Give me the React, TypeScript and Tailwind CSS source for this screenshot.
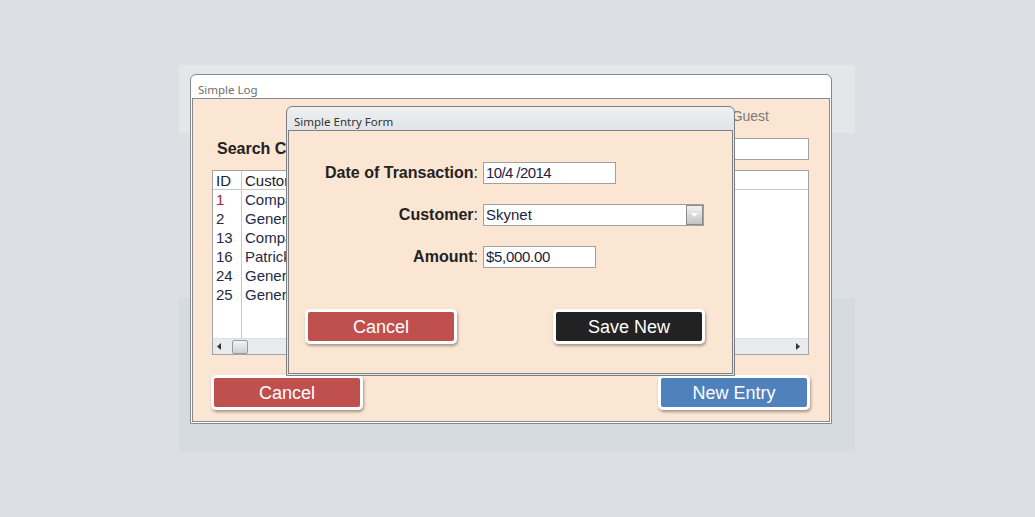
import React from "react";

const rows = [
  { id: 1, name: "Company Alpha", selected: true },
  { id: 2, name: "General Store" },
  { id: 13, name: "Company Beta" },
  { id: 16, name: "Patrick Doyle" },
  { id: 24, name: "General Supply" },
  { id: 25, name: "General Parts" },
];

function FlatButton({
  label,
  tone,
  className = "",
}: {
  label: string;
  tone: "red" | "blue" | "black";
  className?: string;
}) {
  const toneClass =
    tone === "red" ? "bg-[#c0504d]" : tone === "blue" ? "bg-[#4f81bd]" : "bg-[#222222]";
  return (
    <button
      className={`h-[35px] w-[152px] rounded-[5px] border-[3px] border-white shadow-[1px_2px_3px_rgba(0,0,0,0.35)] ${className}`}
    >
      <div className={`flex h-full w-full items-center justify-center rounded-[2px] pt-[1px] text-[18px] text-white ${toneClass}`}>
        {label}
      </div>
    </button>
  );
}

function DataGrid() {
  return (
    <div className="mt-[10px] flex h-[185px] flex-col border border-[#a3a3a3] bg-white text-[15px]">
      <div className="flex flex-1">
        <div className="w-[29px] border-r border-[#c8c8c8]">
          <div className="h-[19px] border-b border-[#c8c8c8] pl-[3px] leading-[19px] text-[#222]">ID</div>
          {rows.map((r) => (
            <div
              key={r.id}
              className={`h-[19px] pl-[3px] leading-[19px] ${r.selected ? "text-[#a3262a]" : "text-[#1f2a48]"}`}
            >
              {r.id}
            </div>
          ))}
        </div>
        <div className="flex-1">
          <div className="h-[19px] border-b border-[#c8c8c8] pl-[3px] leading-[19px] text-[#222]">Customer</div>
          {rows.map((r) => (
            <div key={r.id} className="h-[19px] pl-[3px] leading-[19px] text-[#1f2a48]">
              {r.name}
            </div>
          ))}
        </div>
      </div>
      {/* horizontal scrollbar */}
      <div className="flex h-[16px] items-center border-t border-[#dcdde2] bg-[#e9eaee] px-[3px]">
        <svg width="5" height="7" viewBox="0 0 5 7" className="ml-[1px]">
          <path d="M4 0 L0 3.5 L4 7 Z" fill="#333" />
        </svg>
        <div className="ml-[10px] h-[14px] w-[16px] rounded-[2px] border border-[#9a9a9a] bg-linear-to-b from-[#f4f4f4] to-[#cfcfd2]" />
        <div className="flex-1" />
        <svg width="5" height="7" viewBox="0 0 5 7" className="mr-[5px]">
          <path d="M1 0 L5 3.5 L1 7 Z" fill="#333" />
        </svg>
      </div>
    </div>
  );
}

function MainWindow() {
  return (
    <div className="absolute left-[190px] top-[74px] flex h-[350px] w-[642px] flex-col rounded-t-[6px] border border-[#868a8e] bg-white px-[1px] pb-[1px]">
      <div className="h-[23px] pl-[6px] font-['Noto_Sans',sans-serif] text-[11.5px] leading-[29px] text-[#6e6e6e]">
        Simple Log
      </div>
      <div className="flex flex-1 flex-col border border-[#868a8e] bg-[#fbe5d3] pl-[19px] pr-[20px] pt-[7px]">
        <div className="flex h-[20px] items-center justify-end pr-[40px] text-[14px] text-[#7a7a7a]">
          Logged in as: Guest
        </div>
        <div className="mt-[12px] flex h-[22px] items-center">
          <span className="ml-[5px] text-[16px] font-bold text-[#222]">Search Customer:</span>
          <input
            className="ml-[12px] h-[22px] flex-1 border border-[#a3a3a3] bg-white outline-none"
            defaultValue=""
          />
        </div>
        <DataGrid />
        <div className="mt-[20px] flex justify-between">
          <FlatButton label="Cancel" tone="red" className="-ml-[1px]" />
          <FlatButton label="New Entry" tone="blue" className="-mr-[1px]" />
        </div>
      </div>
    </div>
  );
}

function EntryForm() {
  return (
    <div className="absolute left-[286px] top-[106px] flex h-[270px] w-[449px] flex-col rounded-t-[6px] border border-[#7d8186] bg-[#e4e7ea] px-[1px] pb-[1px]">
      <div className="h-[23px] rounded-t-[5px] bg-linear-to-b from-[#eef0f2] to-[#e1e5e8] pl-[6px] font-['Noto_Sans',sans-serif] text-[11.5px] leading-[30px] text-[#333]">
        Simple Entry Form
      </div>
      <div className="flex flex-1 flex-col border border-[#7d8186] bg-[#fbe5d3] pt-[31px]">
        <div className="flex h-[22px] items-center">
          <label className="w-[189px] text-right text-[16px] font-bold text-[#222]">
            Date of Transaction<span className="font-normal">:</span>
          </label>
          <input
            className="ml-[5px] h-[22px] w-[133px] border border-[#a0a0a0] bg-white px-[2px] text-[15px] tracking-[-0.6px] text-[#1c2340] outline-none"
            defaultValue="10/4 /2014"
          />
        </div>
        <div className="mt-[20px] flex h-[22px] items-center">
          <label className="w-[189px] text-right text-[16px] font-bold text-[#222]">
            Customer<span className="font-normal">:</span>
          </label>
          <div className="ml-[5px] flex h-[22px] w-[221px] items-center border border-[#a0a0a0] bg-white">
            <span className="flex-1 pl-[2px] text-[15px] text-[#1c2340]">Skynet</span>
            <div className="flex h-[20px] w-[17px] items-center justify-center border border-[#8a8a8a] bg-linear-to-b from-[#f2f2f2] to-[#c4c4c6]">
              <svg width="7" height="4" viewBox="0 0 7 4">
                <path d="M0 0 L7 0 L3.5 4 Z" fill="#ffffff" />
              </svg>
            </div>
          </div>
        </div>
        <div className="mt-[20px] flex h-[22px] items-center">
          <label className="w-[189px] text-right text-[16px] font-bold text-[#222]">
            Amount<span className="font-normal">:</span>
          </label>
          <input
            className="ml-[5px] h-[22px] w-[113px] border border-[#a0a0a0] bg-white px-[2px] text-[15px] tracking-[-0.3px] text-[#1c2340] outline-none"
            defaultValue="$5,000.00"
          />
        </div>
        <div className="mt-[41px] flex justify-between pl-[16px] pr-[27px]">
          <FlatButton label="Cancel" tone="red" />
          <FlatButton label="Save New" tone="black" />
        </div>
      </div>
    </div>
  );
}

export default function App() {
  return (
    <div className="relative h-[517px] w-[1035px] overflow-hidden bg-[#dce0e4] font-['Liberation_Sans',Arial,sans-serif]">
      {/* background panels behind the windows */}
      <div className="absolute left-[179px] top-[65px] h-[68px] w-[676px] bg-[#e4e7ea]" />
      <div className="absolute left-[179px] top-[298px] h-[153px] w-[676px] rounded-b-[4px] bg-[#d6dbdf]" />
      <MainWindow />
      <EntryForm />
    </div>
  );
}
